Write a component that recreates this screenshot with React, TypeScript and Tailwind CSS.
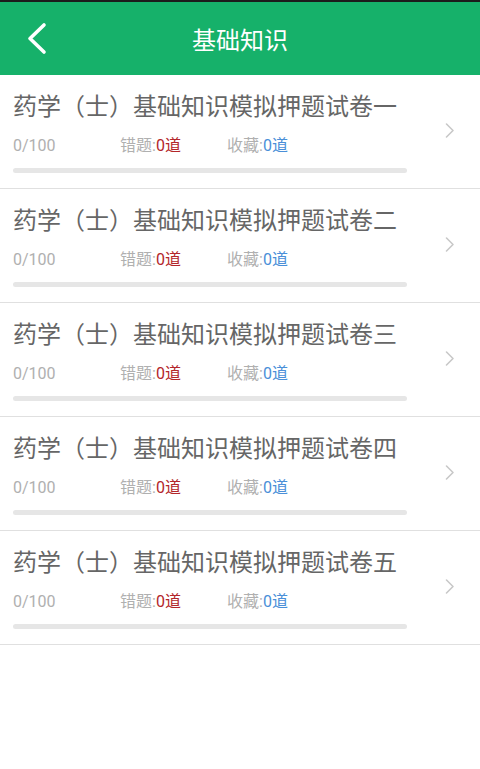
const papers = ['一', '二', '三', '四', '五'];

const font = { fontFamily: '"Noto Sans CJK SC", "Noto Sans", sans-serif' };
const numFont = { fontFamily: 'Roboto, "Noto Sans CJK SC", sans-serif' };

export default function App() {
  return (
    <div className="w-[480px] h-[769px] bg-white" style={font}>
      {/* top edge */}
      <div className="h-[2px] bg-[#1c1c1c]" />

      {/* Header */}
      <div className="relative h-[73px] bg-[#16b16a] flex items-center justify-center">
        <svg className="absolute left-[26px] top-[19px]" width="22" height="35" viewBox="0 0 22 35" fill="none">
          <polyline points="18,4 4,17.5 18,31" stroke="white" strokeWidth="3.6" strokeLinecap="round" strokeLinejoin="round" />
        </svg>
        <h1 className="text-[24px] leading-none text-white">基础知识</h1>
      </div>

      {/* List */}
      <div>
        {papers.map((n) => (
          <div key={n} className="relative border-b border-[#e0e0e0] pl-[13px] pt-[18px] pb-[15px]">
            <div className="text-[24px] leading-[24px] text-[#666666]">
              药学（士）基础知识模拟押题试卷{n}
            </div>
            <div className="mt-[19px] flex items-center text-[16px] leading-[20px] text-[#b0b0b0]" style={numFont}>
              <span className="w-[107px]">0/100</span>
              <span className="w-[107px]">
                错题:<span className="text-[#b3262a]">0道</span>
              </span>
              <span>
                收藏:<span className="text-[#4a8fd8]">0道</span>
              </span>
            </div>
            <div className="mt-[12px] h-[5px] w-[394px] rounded-full bg-[#e6e6e6]" />
            <svg className="absolute left-[444px] top-[47px]" width="12" height="17" viewBox="0 0 12 17" fill="none">
              <polyline points="2.5,2 9,8.5 2.5,15" stroke="#c8c8c8" strokeWidth="1.6" strokeLinecap="round" strokeLinejoin="round" />
            </svg>
          </div>
        ))}
      </div>
    </div>
  );
}
